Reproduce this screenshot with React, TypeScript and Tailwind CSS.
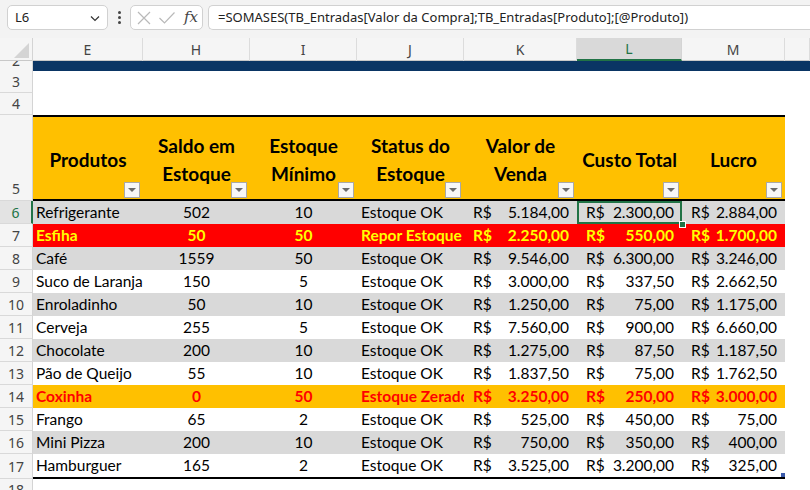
import React from "react";

const COLS =
  "grid grid-cols-[33px_110px_107px_107px_107px_113px_105px_103px_25px]";

type RowT = {
  n: number;
  p: string;
  s: string;
  m: string;
  st: string;
  v: string;
  c: string;
  l: string;
  t: "gray" | "white" | "red" | "orange";
};

const rows: RowT[] = [
  { n: 6, p: "Refrigerante", s: "502", m: "10", st: "Estoque OK", v: "5.184,00", c: "2.300,00", l: "2.884,00", t: "gray" },
  { n: 7, p: "Esfiha", s: "50", m: "50", st: "Repor Estoque", v: "2.250,00", c: "550,00", l: "1.700,00", t: "red" },
  { n: 8, p: "Café", s: "1559", m: "50", st: "Estoque OK", v: "9.546,00", c: "6.300,00", l: "3.246,00", t: "gray" },
  { n: 9, p: "Suco de Laranja", s: "150", m: "5", st: "Estoque OK", v: "3.000,00", c: "337,50", l: "2.662,50", t: "white" },
  { n: 10, p: "Enroladinho", s: "50", m: "10", st: "Estoque OK", v: "1.250,00", c: "75,00", l: "1.175,00", t: "gray" },
  { n: 11, p: "Cerveja", s: "255", m: "5", st: "Estoque OK", v: "7.560,00", c: "900,00", l: "6.660,00", t: "white" },
  { n: 12, p: "Chocolate", s: "200", m: "10", st: "Estoque OK", v: "1.275,00", c: "87,50", l: "1.187,50", t: "gray" },
  { n: 13, p: "Pão de Queijo", s: "55", m: "10", st: "Estoque OK", v: "1.837,50", c: "75,00", l: "1.762,50", t: "white" },
  { n: 14, p: "Coxinha", s: "0", m: "50", st: "Estoque Zerado", v: "3.250,00", c: "250,00", l: "3.000,00", t: "orange" },
  { n: 15, p: "Frango", s: "65", m: "2", st: "Estoque OK", v: "525,00", c: "450,00", l: "75,00", t: "white" },
  { n: 16, p: "Mini Pizza", s: "200", m: "10", st: "Estoque OK", v: "750,00", c: "350,00", l: "400,00", t: "gray" },
  { n: 17, p: "Hamburguer", s: "165", m: "2", st: "Estoque OK", v: "3.525,00", c: "3.200,00", l: "325,00", t: "white" },
];

const rowStyle: Record<RowT["t"], string> = {
  gray: "bg-[#d9d9d9] text-black",
  white: "bg-white text-black",
  red: "bg-[#ff0000] text-[#ffff00] font-bold",
  orange: "bg-[#ffc000] text-[#ff0000] font-bold",
};

const uiFont = "font-['Noto_Sans',sans-serif]";
const cellFont = "font-['Lato',sans-serif]";

function RowHeader({ n, active, className = "" }: { n: React.ReactNode; active?: boolean; className?: string }) {
  return (
    <div
      className={`${uiFont} flex justify-center text-[14px] border-b border-[#d9d9d9] ${
        active ? "bg-[#e3e3e3] text-[#217346] border-r-2 border-r-[#217346]" : "bg-[#f5f5f5] text-[#444] border-r border-r-[#d4d4d4]"
      } ${className}`}
    >
      {n}
    </div>
  );
}

function FilterBtn() {
  return (
    <div className="absolute right-[3px] bottom-[1px] w-[16px] h-[16px] bg-[#f7f7f7] border border-[#a9a9a9] flex items-center justify-center">
      <div className="w-0 h-0 border-l-[4px] border-r-[4px] border-t-[4px] border-l-transparent border-r-transparent border-t-[#6b6b6b]" />
    </div>
  );
}

function Money({ v, sel }: { v: string; sel?: boolean }) {
  return (
    <div className="relative flex items-center justify-between pl-[9px] pr-[8px] whitespace-nowrap">
      <span>R$</span>
      <span>{v}</span>
      {sel && (
        <>
          <div className="absolute inset-0 border-2 border-[#217346]" />
          <div className="absolute right-[-4px] bottom-[-4px] w-[7px] h-[7px] bg-[#217346] border border-white z-10" />
        </>
      )}
    </div>
  );
}

export default function App() {
  const colHeads = ["E", "H", "I", "J", "K", "L", "M", ""];
  return (
    <div className="w-[810px] h-[490px] overflow-hidden bg-white flex flex-col">
      {/* Formula bar */}
      <div className={`${uiFont} h-[38px] shrink-0 bg-[#f3f3f3] flex items-start pt-[5px] pl-[7px] gap-0`}>
        <div className="w-[101px] h-[25px] bg-white border border-[#d1d1d1] rounded-[5px] flex items-center justify-between pl-[7px] pr-[6px] text-[13px] text-[#222]">
          <span>L6</span>
          <svg width="12" height="12" viewBox="0 0 12 12">
            <path d="M2 4.5 L6 8.5 L10 4.5" fill="none" stroke="#333" strokeWidth="1.2" />
          </svg>
        </div>
        <div className="w-[22px] h-[25px] flex flex-col items-center justify-center gap-[2px]">
          <div className="w-[3px] h-[3px] bg-[#444] rounded-full" />
          <div className="w-[3px] h-[3px] bg-[#444] rounded-full" />
          <div className="w-[3px] h-[3px] bg-[#444] rounded-full" />
        </div>
        <div className="w-[73px] h-[25px] bg-white border border-[#d1d1d1] rounded-[5px] flex items-center pl-[5px] gap-[6px]">
          <svg width="16" height="16" viewBox="0 0 16 16">
            <path d="M2 2 L14 14 M14 2 L2 14" stroke="#b9b9b9" strokeWidth="1.2" />
          </svg>
          <svg width="18" height="16" viewBox="0 0 18 16">
            <path d="M1.5 8 L6.5 13 L16.5 2.5" fill="none" stroke="#b9b9b9" strokeWidth="1.2" />
          </svg>
          <span className="font-['DejaVu_Serif',serif] italic text-[15px] text-[#444] leading-none ml-[2px]">fx</span>
        </div>
        <div className="ml-[5px] flex-1 h-[25px] bg-white border border-[#d1d1d1] border-r-0 rounded-l-[5px] flex items-center pl-[9px] text-[13px] text-[#222] whitespace-nowrap overflow-hidden">
          =SOMASES(TB_Entradas[Valor da Compra];TB_Entradas[Produto];[@Produto])
        </div>
      </div>

      {/* Column headers */}
      <div className={`${COLS} ${uiFont} h-[23px] shrink-0 bg-[#f5f5f5] border-b border-[#c8c8c8] text-[14px] text-[#444]`}>
        <div className="border-r border-[#d4d4d4] flex items-end justify-end pr-[3px] pb-[3px]">
          <svg width="15" height="15" viewBox="0 0 15 15">
            <polygon points="15,0 15,15 0,15" fill="#d4d4d4" />
          </svg>
        </div>
        {colHeads.map((h, i) =>
          h === "L" ? (
            <div key={i} className="flex items-center justify-center bg-[#d9d9d9] text-[#217346] border-b-2 border-[#217346] border-r border-r-[#d4d4d4]">
              {h}
            </div>
          ) : (
            <div key={i} className="flex items-center justify-center border-r border-[#dcdcdc]">
              {h}
            </div>
          )
        )}
      </div>

      {/* Row 2 (partially visible) */}
      <div className={`${COLS} h-[10px] shrink-0`}>
        <div className="h-[10px] overflow-hidden flex flex-col justify-end bg-[#f5f5f5] border-r border-[#d4d4d4]">
          <div className={`${uiFont} h-[22px] shrink-0 flex items-center justify-center text-[14px] text-[#444]`}>2</div>
        </div>
        <div className="col-span-8 bg-[#0a3564]" />
      </div>

      {/* Rows 3, 4 */}
      <div className={`${COLS} h-[22px] shrink-0`}>
        <RowHeader n="3" className="items-center" />
        <div className="col-span-8" />
      </div>
      <div className={`${COLS} h-[22px] shrink-0`}>
        <RowHeader n="4" className="items-center" />
        <div className="col-span-8" />
      </div>

      {/* Row 5: table header */}
      <div className={`${COLS} h-[86px] shrink-0`}>
        <RowHeader n="5" className="items-end pb-[1px]" />
        {[
          ["Produtos"],
          ["Saldo em", "Estoque"],
          ["Estoque", "Mínimo"],
          ["Status do", "Estoque"],
          ["Valor de", "Venda"],
          ["Custo Total"],
          ["Lucro"],
        ].map((lines, i) => (
          <div
            key={i}
            className={`${cellFont} relative bg-[#ffc000] border-t-2 border-b-2 border-black flex flex-col items-center justify-center pt-[3px] text-[19px] font-bold text-black leading-[28px]`}
          >
            {lines.map((l, j) => (
              <div key={j} className="whitespace-nowrap">
                {l}
              </div>
            ))}
            <FilterBtn />
          </div>
        ))}
        <div />
      </div>

      {/* Data rows */}
      {rows.map((r, idx) => {
        const last = idx === rows.length - 1;
        const cell = `${cellFont} ${rowStyle[r.t]} ${last ? "border-b-2 border-black" : ""} text-[15.5px]`;
        return (
          <div key={r.n} className={`${COLS} ${last ? "h-[25px]" : "h-[23px]"} shrink-0`}>
            <RowHeader n={r.n} active={r.n === 6} className="items-center" />
            <div className={`${cell} flex items-center pl-[3px] overflow-hidden whitespace-nowrap`}>{r.p}</div>
            <div className={`${cell} flex items-center justify-center`}>{r.s}</div>
            <div className={`${cell} flex items-center justify-center`}>{r.m}</div>
            <div className={`${cell} flex items-center pl-[4px] overflow-hidden whitespace-nowrap`}>{r.st}</div>
            <div className={`${cell} grid`}>
              <Money v={r.v} />
            </div>
            <div className={`${cell} grid`}>
              <Money v={r.c} sel={r.n === 6} />
            </div>
            <div className={`${cell} grid relative`}>
              <Money v={r.l} />
              {last && <div className="absolute right-0 bottom-0 w-[4px] h-[4px] bg-[#3b5bab]" />}
            </div>
            <div className="bg-white" />
          </div>
        );
      })}

      {/* Row 18 */}
      <div className={`${COLS} h-[22px] shrink-0`}>
        <RowHeader n="18" className="items-center" />
        <div className="col-span-8" />
      </div>
    </div>
  );
}
